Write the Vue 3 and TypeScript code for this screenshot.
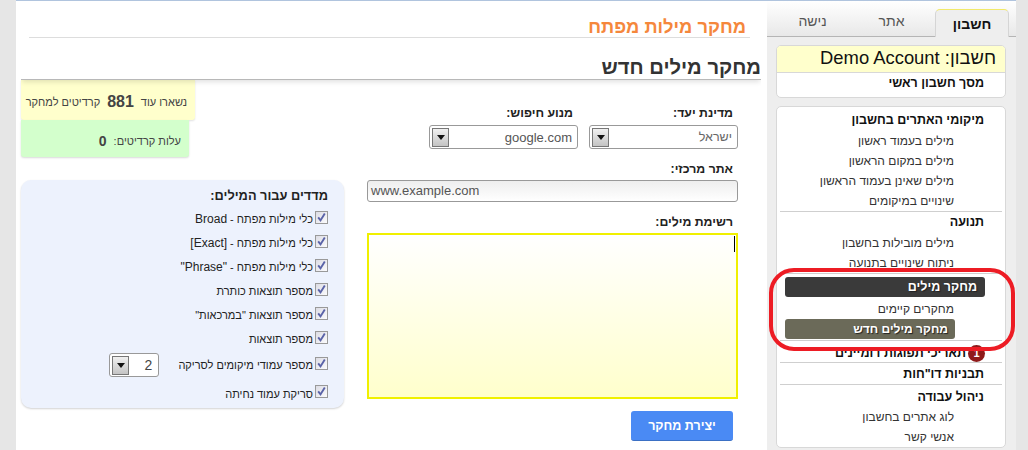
<script setup lang="ts">
const tabs = [
  { label: 'חשבון', active: true },
  { label: 'אתר', active: false },
  { label: 'נישה', active: false },
]
const metrics = [
  { he: 'כלי מילות מפתח - ', en: 'Broad' },
  { he: 'כלי מילות מפתח - ', en: '[Exact]' },
  { he: 'כלי מילות מפתח - ', en: '"Phrase"' },
  { he: 'מספר תוצאות כותרת', en: '' },
  { he: 'מספר תוצאות "במרכאות"', en: '' },
  { he: 'מספר תוצאות', en: '' },
]
</script>

<template>
  <div class="page" dir="rtl">
    <aside class="sidebar">
      <nav class="tabs">
        <span v-for="t in tabs" :key="t.label" class="tab" :class="{ active: t.active }">{{ t.label }}</span>
      </nav>
      <section class="card account">
        <div class="acct-name">חשבון: Demo Account</div>
        <div class="menu-head acct-home">מסך חשבון ראשי</div>
      </section>
      <section class="card menu">
        <div class="menu-head">מיקומי האתרים בחשבון</div>
        <a class="item">מילים בעמוד ראשון</a>
        <a class="item">מילים במקום הראשון</a>
        <a class="item">מילים שאינן בעמוד הראשון</a>
        <a class="item">שינויים במיקומים</a>
        <hr class="sep" />
        <div class="menu-head">תנועה</div>
        <a class="item">מילים מובילות בחשבון</a>
        <a class="item">ניתוח שינויים בתנועה</a>
        <hr class="sep faint" />
        <div class="bar dark">מחקר מילים</div>
        <a class="item tight">מחקרים קיימים</a>
        <div class="bar olive">מחקר מילים חדש</div>
        <hr class="sep flush" />
        <div class="menu-head badge-row"><span class="badge">1</span>תאריכי תפוגות דומיינים</div>
        <hr class="sep flush" />
        <div class="menu-head single">תבניות דו"חות</div>
        <hr class="sep flush" />
        <div class="menu-head single work">ניהול עבודה</div>
        <a class="item">לוג אתרים בחשבון</a>
        <a class="item">אנשי קשר</a>
      </section>
      <div class="callout"></div>
    </aside>

    <main class="main">
      <h1 class="title">מחקר מילות מפתח</h1>
      <h2 class="band">מחקר מילים חדש</h2>
      <div class="columns">
        <form class="form" @submit.prevent>
          <div class="two">
            <div class="field">
              <label class="lbl">מדינת יעד:</label>
              <div class="select wide">
                <span class="val il">ישראל</span>
                <span class="arrow"><svg width="8" height="5" viewBox="0 0 8 5"><path d="M0 0h8L4 5z" fill="#111" /></svg></span>
              </div>
            </div>
            <div class="field">
              <label class="lbl">מנוע חיפוש:</label>
              <div class="select wide">
                <span class="val">google.com</span>
                <span class="arrow"><svg width="8" height="5" viewBox="0 0 8 5"><path d="M0 0h8L4 5z" fill="#111" /></svg></span>
              </div>
            </div>
          </div>
          <label class="lbl site">אתר מרכזי:</label>
          <div class="url" dir="ltr">www.example.com</div>
          <label class="lbl words">רשימת מילים:</label>
          <div class="area"><span class="caret"></span></div>
          <button class="go" type="button">יצירת מחקר</button>
        </form>

        <div class="side">
          <div class="credit yellow">
            <span>נשארו עוד</span><b>881</b><span>קרדיטים למחקר</span>
          </div>
          <div class="credit green">
            <span>עלות קרדיטים:</span><b>0</b>
          </div>
          <section class="panel">
            <h3 class="panel-title">מדדים עבור המילים:</h3>
            <div v-for="m in metrics" :key="m.he + m.en" class="row">
              <span class="check"><svg width="11" height="11" viewBox="0 0 11 11"><path d="M2.2 5.4l2.3 3L8.8 1.4" fill="none" stroke="#5a63a8" stroke-width="1.9" /></svg></span>
              <span>{{ m.he }}<span class="latin">{{ m.en }}</span></span>
            </div>
            <div class="row pages">
              <span class="check"><svg width="11" height="11" viewBox="0 0 11 11"><path d="M2.2 5.4l2.3 3L8.8 1.4" fill="none" stroke="#5a63a8" stroke-width="1.9" /></svg></span>
              <span>מספר עמודי מיקומים לסריקה</span>
              <div class="select small">
                <span class="val">2</span>
                <span class="arrow"><svg width="8" height="5" viewBox="0 0 8 5"><path d="M0 0h8L4 5z" fill="#111" /></svg></span>
              </div>
            </div>
            <div class="row last">
              <span class="check"><svg width="11" height="11" viewBox="0 0 11 11"><path d="M2.2 5.4l2.3 3L8.8 1.4" fill="none" stroke="#5a63a8" stroke-width="1.9" /></svg></span>
              <span>סריקת עמוד נחיתה</span>
            </div>
          </section>
        </div>
      </div>
    </main>
  </div>
</template>

<style>
html, body { margin: 0; background: #e6e6e6; overflow: hidden; }
</style>

<style scoped>
.page {
  display: flex;
  width: 1028px;
  height: 450px;
  box-sizing: border-box;
  padding-right: 12px;
  padding-left: 16px;
  overflow: hidden;
  background: #e6e6e6;
  font-family: "Liberation Sans", Arial, sans-serif;
  color: #222;
}
.sidebar {
  position: relative;
  flex: 0 0 249px;
  box-sizing: border-box;
  height: 450px;
  padding-right: 10px;
  padding-left: 9px;
  background: #eeeeee;
  border-top: 1px solid #b0c4de;
}
.tabs {
  display: flex;
  align-items: flex-end;
  height: 36px;
  margin: 0 -10px 8px -9px;
  padding-right: 7px;
  box-sizing: border-box;
  background: linear-gradient(#ffffff, #e8e8e8);
  border-bottom: 1px solid #b5b5b5;
}
.tab {
  width: 79px;
  height: 26px;
  text-align: center;
  font-size: 14px;
  line-height: 22px;
  color: #555;
}
.tab.active {
  flex: 0 0 74px;
  width: 74px;
  height: 28px;
  margin-bottom: -1px;
  margin-left: 4px;
  box-sizing: border-box;
  line-height: 29px;
  font-weight: bold;
  color: #111;
  background: #eeeeee;
  border: 1px solid #d5d5d5;
  border-top: 1px solid #f2e96a;
  border-bottom: 0;
  border-radius: 5px 5px 0 0;
}
.card {
  background: #fff;
  border: 1px solid #d8d8d8;
  border-radius: 5px;
  box-sizing: border-box;
  overflow: hidden;
}
.account { height: 53px; margin-bottom: 8px; }
.acct-name {
  height: 26px;
  padding-right: 9px;
  background: #ffffcc;
  border-bottom: 1px solid #d8d8d8;
  font-size: 18.4px;
  line-height: 24px;
  color: #111;
}
.acct-home { height: 24px; line-height: 27px; }
.menu { height: 342px; padding-top: 3px; }
.menu-head {
  height: 21px;
  padding-right: 21px;
  font-size: 12.5px;
  font-weight: bold;
  line-height: 21px;
  color: #111;
}
.item {
  display: block;
  height: 20px;
  padding-right: 51px;
  font-size: 12px;
  line-height: 20px;
  color: #333;
}
.sep {
  height: 1px;
  margin: 0 3px 0 3px;
  border: 0;
  background: #cfcfcf;
}
.faint { margin-top: 0; margin-bottom: 3px; }
.bar {
  height: 20px;
  border-radius: 3px;
  font-size: 12px;
  font-weight: bold;
  line-height: 20px;
  color: #fff;
  text-shadow: 1px 1px 1px #222;
  box-sizing: border-box;
}
.dark {
  margin: 0 20px 0 8px;
  padding-right: 8px;
  background: #3a3a3a;
  font-size: 12.5px;
}
.olive {
  margin: 0 50px 1px 8px;
  padding-right: 7px;
  background: #6b6a59;
}
.tight { margin-top: 2px; }
.flush { margin-top: 0; }
.badge-row {
  display: flex;
  align-items: center;
  box-sizing: border-box;
  padding-top: 3px;
  padding-right: 20px;
}
.badge {
  width: 17px;
  height: 17px;
  margin-left: 2px;
  border-radius: 50%;
  background: #8f1a1a;
  color: #fff;
  font-size: 11px;
  line-height: 17px;
  text-align: center;
}
.single { height: 21px; line-height: 22px; }
.work { height: 22px; line-height: 24px; }
.callout {
  position: absolute;
  top: 267px;
  left: 2px;
  width: 246px;
  height: 83px;
  box-sizing: border-box;
  border: 4px solid #ed1c24;
  border-radius: 25px;
  pointer-events: none;
}
.main {
  flex: 1;
  box-sizing: border-box;
  height: 450px;
  padding-right: 6px;
  padding-left: 5px;
  background: #fff;
  border-top: 1px solid #b0c4de;
}
.title {
  height: 37px;
  margin: 0 11px 0 8px;
  padding-right: 4px;
  box-sizing: border-box;
  border-bottom: 1px solid #dddddd;
  font-size: 18.3px;
  font-weight: bold;
  line-height: 52px;
  color: #f5873c;
}
.band {
  height: 42px;
  margin: 0;
  box-sizing: border-box;
  border-bottom: 1px solid #b8b8b8;
  box-shadow: 0 3px 5px -1px rgba(0, 0, 0, 0.12);
  clip-path: inset(0 0 -8px 0);
  font-size: 20.2px;
  font-weight: bold;
  line-height: 58px;
  color: #333;
}
.columns {
  display: flex;
  gap: 23px;
}
.form {
  flex: 0 0 371px;
  width: 371px;
  display: flex;
  flex-direction: column;
  padding-top: 25px;
  margin-right: 23px;
}
.two { display: flex; gap: 11px; }
.field { display: flex; flex-direction: column; }
.lbl {
  height: 16px;
  padding-right: 5px;
  font-size: 12.3px;
  font-weight: bold;
  line-height: 16px;
  color: #222;
}
.field .lbl { margin-bottom: 4px; }
.select {
  display: flex;
  align-items: center;
  justify-content: space-between;
  box-sizing: border-box;
  border: 1px solid #999;
  border-radius: 3px;
  background: #fff;
  color: #555;
}
.wide { width: 149px; height: 24px; padding: 0 5px 0 2px; }
.val { font-size: 13px; }
.il { color: #666; font-size: 12.5px; }
.arrow {
  display: flex;
  align-items: center;
  justify-content: center;
  width: 15px;
  height: 17px;
  border: 1px solid #777;
  background: linear-gradient(#f0f0f0, #c4c4c4);
}
.small {
  width: 50px;
  height: 24px;
  margin-right: 19px;
  padding: 0 6px 0 2px;
  color: #444;
}
.small .val { font-size: 14px; }
.site { margin-top: 12px; }
.url {
  box-sizing: border-box;
  height: 22px;
  margin-top: 3px;
  padding-left: 3px;
  border: 1px solid #999;
  border-radius: 3px;
  background: linear-gradient(#eeeeee, #ffffff);
  font-size: 13px;
  line-height: 20px;
  color: #555;
  text-align: left;
}
.words { margin-top: 12px; }
.area {
  position: relative;
  box-sizing: border-box;
  height: 166px;
  margin-top: 3px;
  border: 2px solid #f0f000;
  background: linear-gradient(#ffffff, #ffffcc);
}
.caret {
  position: absolute;
  top: 1px;
  right: 1px;
  width: 1px;
  height: 16px;
  background: #000;
}
.go {
  align-self: flex-start;
  width: 102px;
  height: 30px;
  margin: 12px 5px 0 0;
  padding: 0;
  border: 0;
  border-bottom: 1px solid #3b70c4;
  border-radius: 3px;
  background: #4a8af4;
  color: #fff;
  font-family: inherit;
  font-size: 12.5px;
  font-weight: bold;
}
.side {
  flex: 0 0 323px;
  width: 323px;
  display: flex;
  flex-direction: column;
  align-items: flex-end;
}
.credit {
  display: flex;
  align-items: center;
  box-sizing: border-box;
  font-size: 11px;
  color: #444;
}
.credit b { font-size: 16px; color: #444; }
.yellow {
  width: 174px;
  height: 40px;
  padding: 4px 8px 0 0;
  gap: 7px;
  background: #ffffcc;
  border-radius: 0 0 3px 3px;
  box-shadow: 0 1px 2px rgba(0, 0, 0, 0.12);
}
.green {
  width: 168px;
  height: 37px;
  padding: 5px 8px 0 0;
  gap: 7px;
  background: #d3ffcc;
  border-radius: 0 0 3px 3px;
  box-shadow: 0 1px 2px rgba(0, 0, 0, 0.15);
}
.green b { font-size: 14px; }
.panel {
  width: 323px;
  height: 228px;
  margin-top: 23px;
  box-sizing: border-box;
  padding: 8px 16px 0 0;
  background: #edf2fd;
  border-radius: 10px;
  box-shadow: 0 1px 2px rgba(0, 0, 0, 0.18);
}
.panel-title {
  height: 18px;
  margin: 0;
  font-size: 12.8px;
  font-weight: bold;
  line-height: 16px;
  color: #222;
}
.row {
  display: flex;
  align-items: center;
  box-sizing: border-box;
  height: 24px;
  padding-top: 2px;
  font-size: 11px;
  color: #222;
}
.latin { font-size: 12px; }
.check {
  display: flex;
  align-items: center;
  justify-content: center;
  box-sizing: border-box;
  width: 13px;
  height: 13px;
  margin-left: 2px;
  margin-top: -4px;
  border: 1px solid #999;
  background: linear-gradient(135deg, #dcdce4, #fbfbfd);
}
.pages { height: 28px; }
.last { height: 29px; }
</style>
